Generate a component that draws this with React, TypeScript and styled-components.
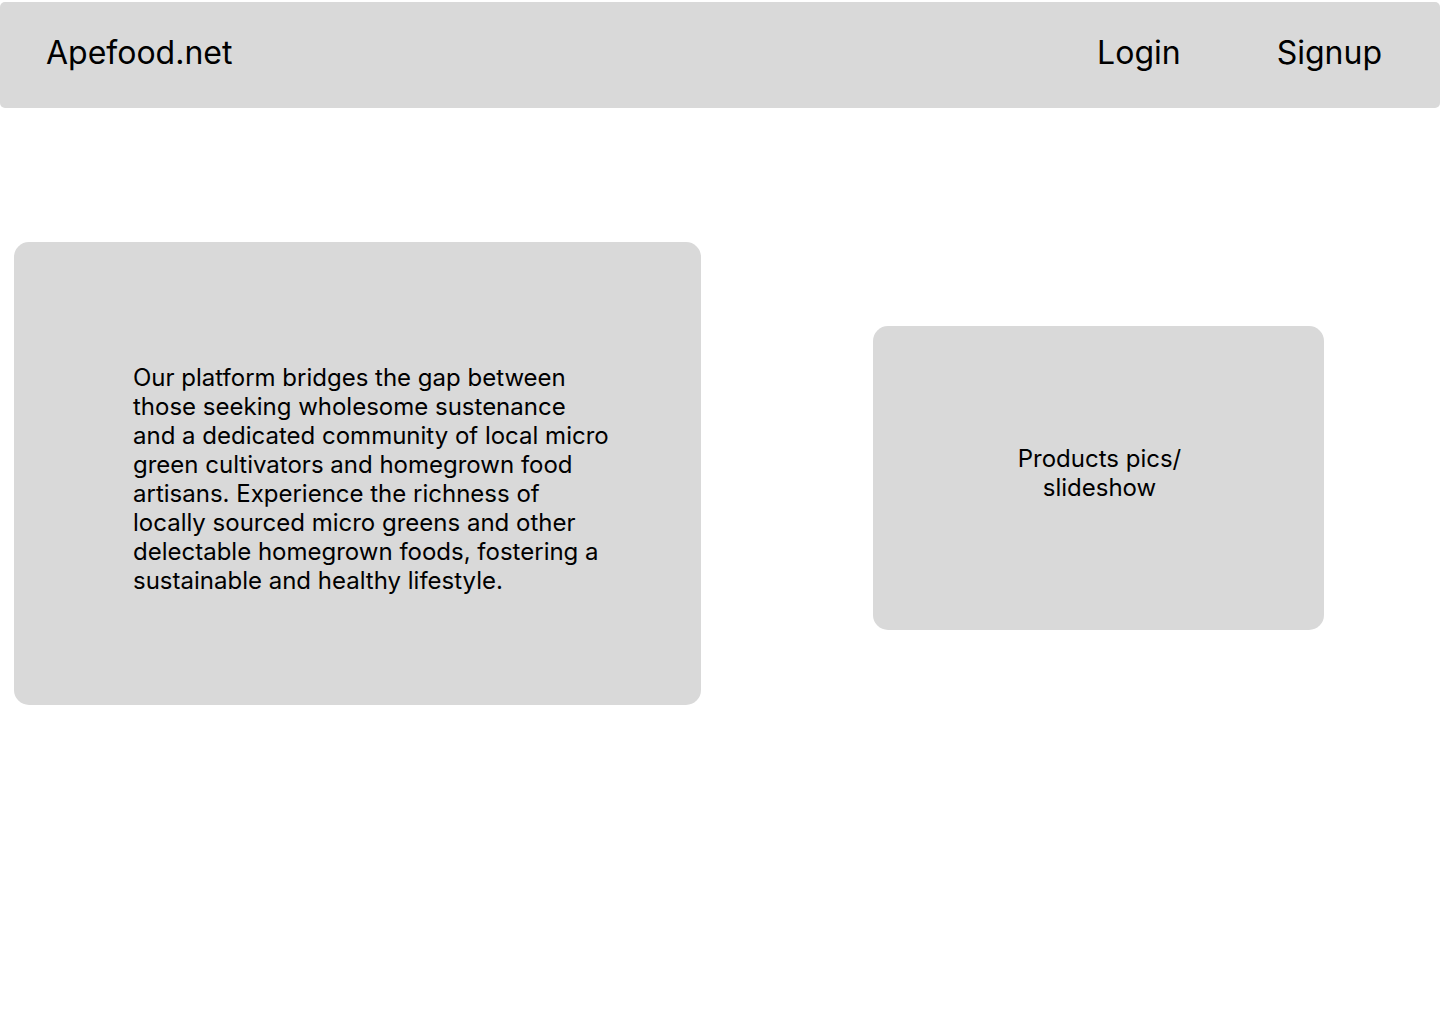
import React from "react";
import styled, { createGlobalStyle } from "styled-components";

const GlobalStyle = createGlobalStyle`
  *, *::before, *::after { box-sizing: border-box; }
  body {
    margin: 0;
    background: #ffffff;
    color: #000000;
    font-family: Inter, "Liberation Sans", sans-serif;
  }
`;

const Header = styled.header`
  display: flex;
  align-items: center;
  justify-content: space-between;
  min-height: 106px;
  margin-top: 2px;
  padding: 0 58px 6px 46px;
  background: #d9d9d9;
  border-radius: 5px;
`;

const Nav = styled.nav`
  display: flex;
  gap: 96px;
`;

const HeaderLink = styled.a`
  color: inherit;
  font-size: 32px;
  line-height: 39px;
  text-decoration: none;
`;

const Main = styled.main`
  display: grid;
  grid-template-columns: 687fr 451fr;
  column-gap: 172px;
  align-items: center;
  padding: 134px 116px 40px 14px;
`;

const Panel = styled.section`
  display: flex;
  align-items: center;
  background: #d9d9d9;
  border-radius: 15px;
  font-size: 24px;
  line-height: 29px;
`;

const AboutPanel = styled(Panel)`
  min-height: 463px;
  padding: 10px 88px 0 119px;
`;

const SlideshowPanel = styled(Panel)`
  justify-content: center;
  min-height: 304px;
  margin-top: 8px;
  padding: 0 118px 10px 120px;
  text-align: center;
`;

const Copy = styled.p`
  max-width: 480px;
  margin: 0;
`;

export default function App() {
  return (
    <>
      <GlobalStyle />
      <Header>
        <HeaderLink href="#home">Apefood.net</HeaderLink>
        <Nav aria-label="Account">
          <HeaderLink href="#login">Login</HeaderLink>
          <HeaderLink href="#signup">Signup</HeaderLink>
        </Nav>
      </Header>
      <Main>
        <AboutPanel aria-label="About">
          <Copy>
            Our platform bridges the gap between those seeking wholesome
            sustenance and a dedicated community of local micro green
            cultivators and homegrown food artisans. Experience the richness of
            locally sourced micro greens and other delectable homegrown foods,
            fostering a sustainable and healthy lifestyle.
          </Copy>
        </AboutPanel>
        <SlideshowPanel aria-label="Products">
          <Copy>
            Products pics/
            <br />
            slideshow
          </Copy>
        </SlideshowPanel>
      </Main>
    </>
  );
}
